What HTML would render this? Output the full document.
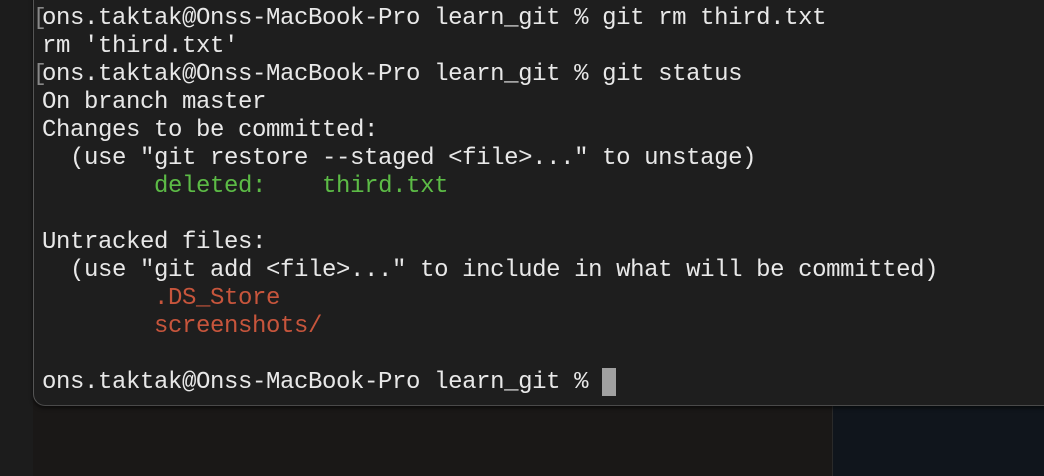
<!DOCTYPE html>
<html><head><style>
html,body{margin:0;padding:0;width:1044px;height:476px;overflow:hidden;background:#1a1817;}
.left{position:absolute;left:0;top:0;width:33px;height:476px;background:#1c1c1c;}
.nav{position:absolute;left:832px;top:405px;width:212px;height:71px;background:#10151c;border-left:1px solid #2a2a2a;}
.term{position:absolute;left:33px;top:-20px;width:1030px;height:425px;background:#1e1e1e;border-radius:0 0 0 12px;border-left:1px solid #555;border-bottom:1px solid #4a4a4a;box-shadow:0 2px 4px rgba(0,0,0,.6);}
pre{position:absolute;left:42px;top:5px;margin:0;font-family:"Liberation Mono",monospace;font-size:24px;letter-spacing:-0.4px;line-height:28px;color:#e8e8e8;}
.g{color:#5cbb46}.r{color:#c7553c}
.br{position:absolute;left:33px;font-family:"Liberation Mono",monospace;font-size:23px;line-height:28px;color:#888;}
.cur{position:absolute;left:602px;top:368px;width:14px;height:28px;background:#a0a0a0;}
</style></head><body>
<div class="left"></div>
<div class="nav"></div>
<div class="term"></div>
<div class="br" style="top:4px">[</div>
<div class="br" style="top:60px">[</div>
<pre>ons.taktak@Onss-MacBook-Pro learn_git % git rm third.txt
rm 'third.txt'
ons.taktak@Onss-MacBook-Pro learn_git % git status
On branch master
Changes to be committed:
  (use "git restore --staged &lt;file&gt;..." to unstage)
	<span class="g">deleted:    third.txt</span>

Untracked files:
  (use "git add &lt;file&gt;..." to include in what will be committed)
	<span class="r">.DS_Store</span>
	<span class="r">screenshots/</span>

ons.taktak@Onss-MacBook-Pro learn_git % </pre>
<div class="cur"></div>
</body></html>
